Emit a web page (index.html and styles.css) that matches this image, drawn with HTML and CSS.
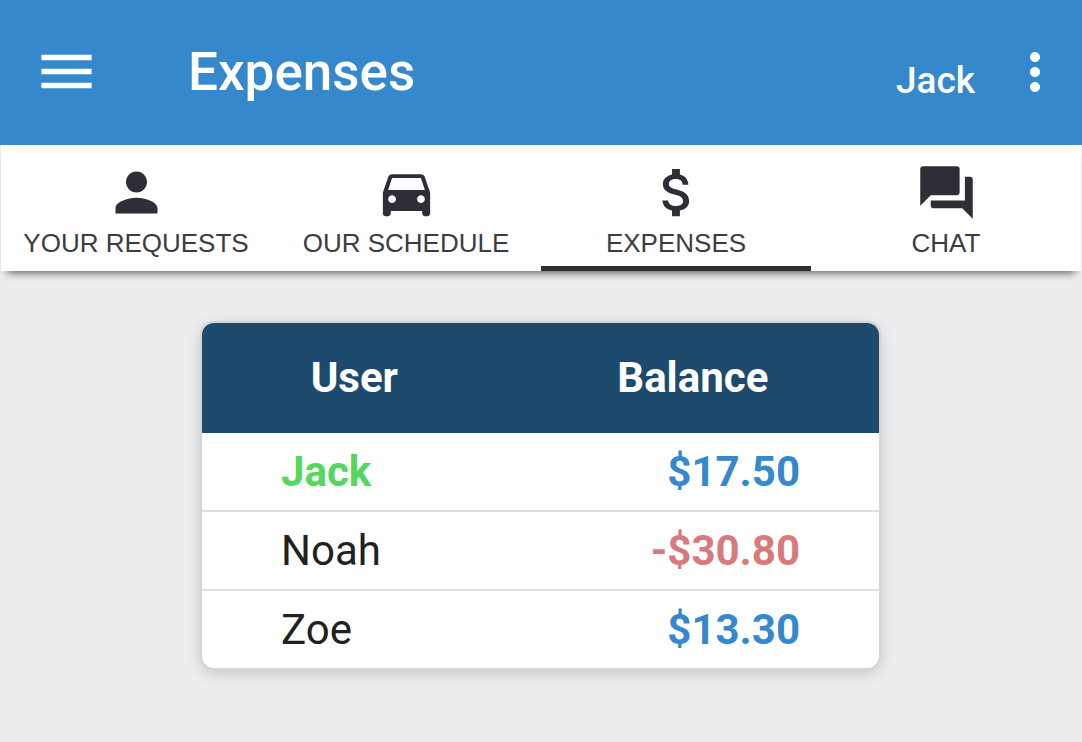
FILE: index.html
```html
<!DOCTYPE html>
<html lang="en">
<head>
  <meta charset="UTF-8" />
  <meta name="viewport" content="width=device-width, initial-scale=1" />
  <title>Expenses</title>
  <link rel="stylesheet" href="styles.css">
</head>
<body>
  <header class="toolbar">
    <button type="button" class="icon-btn menu-btn" aria-label="Open menu">
      <svg viewBox="0 0 24 24"><path d="M3 18h18v-2H3v2zm0-5h18v-2H3v2zm0-7v2h18V6H3z"/></svg>
    </button>
    <h1>Expenses</h1>
    <span class="user-name">Jack</span>
    <button type="button" class="icon-btn more-btn" aria-label="More options">
      <svg viewBox="0 0 24 24"><path d="M12 8c1.1 0 2-.9 2-2s-.9-2-2-2-2 .9-2 2 .9 2 2 2zm0 2c-1.1 0-2 .9-2 2s.9 2 2 2 2-.9 2-2-.9-2-2-2zm0 6c-1.1 0-2 .9-2 2s.9 2 2 2 2-.9 2-2-.9-2-2-2z"/></svg>
    </button>
  </header>

  <nav class="tabs">
    <a href="#requests" class="tab">
      <svg viewBox="0 0 24 24"><path d="M12 12c2.21 0 4-1.79 4-4s-1.79-4-4-4-4 1.79-4 4 1.79 4 4 4zm0 2c-2.67 0-8 1.34-8 4v2h16v-2c0-2.66-5.33-4-8-4z"/></svg>
      <span>YOUR REQUESTS</span>
    </a>
    <a href="#schedule" class="tab">
      <svg viewBox="0 0 24 24"><path d="M18.92 6.01C18.72 5.42 18.16 5 17.5 5h-11c-.66 0-1.21.42-1.42 1.01L3 12v8c0 .55.45 1 1 1h1c.55 0 1-.45 1-1v-1h12v1c0 .55.45 1 1 1h1c.55 0 1-.45 1-1v-8l-2.08-5.99zM6.5 16c-.83 0-1.5-.67-1.5-1.5S5.67 13 6.5 13s1.5.67 1.5 1.5S7.33 16 6.5 16zm11 0c-.83 0-1.5-.67-1.5-1.5s.67-1.5 1.5-1.5 1.5.67 1.5 1.5-.67 1.5-1.5 1.5zM5 11l1.5-4.5h11L19 11H5z"/></svg>
      <span>OUR SCHEDULE</span>
    </a>
    <a href="#expenses" class="tab active" aria-current="page">
      <svg viewBox="0 0 24 24"><path d="M12.1 10.9c-2.27-.59-3-1.2-3-2.15 0-1.09 1.01-1.85 2.7-1.85 1.78 0 2.44.85 2.5 2.1h2.21c-.07-1.72-1.12-3.3-3.21-3.81V3h-3v2.16c-1.94.42-3.5 1.68-3.5 3.61 0 2.31 1.91 3.46 4.7 4.13 2.5.6 3 1.48 3 2.41 0 .69-.49 1.79-2.7 1.79-2.06 0-2.87-.92-2.98-2.1h-2.2c.12 2.19 1.76 3.42 3.68 3.83V21h3v-2.15c1.95-.37 3.5-1.5 3.5-3.55 0-2.84-2.43-3.81-4.7-4.4z"/></svg>
      <span>EXPENSES</span>
    </a>
    <a href="#chat" class="tab">
      <svg viewBox="0 0 24 24"><path d="M21 6h-2v9H6v2c0 .55.45 1 1 1h11l4 4V7c0-.55-.45-1-1-1zm-4 6V3c0-.55-.45-1-1-1H3c-.55 0-1 .45-1 1v14l4-4h10c.55 0 1-.45 1-1z"/></svg>
      <span>CHAT</span>
    </a>
  </nav>

  <main>
    <table class="balances">
      <thead>
        <tr>
          <th class="col-user">User</th>
          <th>Balance</th>
        </tr>
      </thead>
      <tbody>
        <tr class="current">
          <td>Jack</td>
          <td class="amount">$17.50</td>
        </tr>
        <tr>
          <td>Noah</td>
          <td class="amount negative">-$30.80</td>
        </tr>
        <tr>
          <td>Zoe</td>
          <td class="amount">$13.30</td>
        </tr>
      </tbody>
    </table>
  </main>
</body>
</html>
```
FILE: styles.css
```css
* {
  box-sizing: border-box;
}

body {
  margin: 0;
  font-family: Roboto, "Liberation Sans", sans-serif;
  background: #ecedef;
  color: #212121;
}

.toolbar {
  display: flex;
  align-items: center;
  min-height: 145px;
  padding: 0 17px 2px 33px;
  background: #3588cc;
  color: #fff;
}

.icon-btn {
  padding: 0;
  border: none;
  background: none;
  color: inherit;
  cursor: pointer;
}

.icon-btn svg {
  display: block;
  width: 100%;
  fill: currentColor;
}

.menu-btn {
  width: 67px;
}

.more-btn {
  width: 60px;
}

h1 {
  flex: 1;
  margin: 0 0 0 88px;
  font-size: 53px;
  font-weight: 500;
}

.user-name {
  margin-right: 30px;
  padding-top: 18px;
  font-size: 37px;
  font-weight: 500;
}

.tabs {
  display: grid;
  grid-template-columns: repeat(4, 1fr);
  margin: 0 1px;
  background: #fff;
  box-shadow: 0 8px 8px -6px rgba(0, 0, 0, 0.6);
}

.tab {
  display: flex;
  flex-direction: column;
  align-items: center;
  height: 126px;
  padding-top: 16px;
  border-bottom: 5px solid transparent;
  color: #3c3c40;
  font-family: "Liberation Sans", Arial, sans-serif;
  font-size: 26px;
  line-height: 38px;
  text-decoration: none;
  white-space: nowrap;
}

.tab svg {
  width: 63px;
  height: 63px;
  fill: #2e2e36;
}

.tab.active {
  border-bottom-color: #2e2e32;
}

main {
  padding: 52px 203px 52px 202px;
}

.balances {
  width: 100%;
  border-collapse: separate;
  border-spacing: 0;
  border-radius: 12px;
  overflow: hidden;
  background: #fff;
  box-shadow: 0 0 0 2px #d4d5d6, 0 4px 16px rgba(0, 0, 0, 0.2);
  font-size: 42px;
  line-height: 48px;
}

th {
  height: 110px;
  padding: 0;
  background: #1d4a6d;
  color: #fff;
  font-weight: 700;
}

.col-user {
  width: 45%;
}

td {
  height: 79px;
  padding: 0 79px;
  border-bottom: 2px solid #dfdfdf;
}

tr:last-child td {
  height: 77px;
  border-bottom: none;
}

.current {
  color: #54d75c;
  font-weight: 700;
}

.amount {
  color: #3588cc;
  font-weight: 700;
  text-align: right;
}

.negative {
  color: #d77a7e;
}
```
